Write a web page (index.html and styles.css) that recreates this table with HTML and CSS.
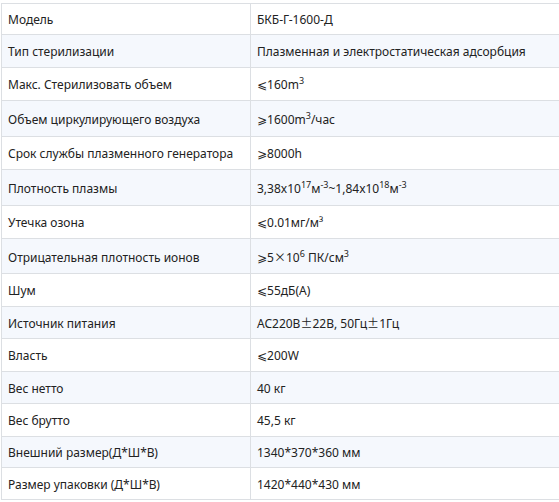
FILE: index.html
```html
<!DOCTYPE html>
<html lang="ru">
<head>
<meta charset="utf-8">
<link rel="stylesheet" href="styles.css">
</head>
<body>
<table class="spec">
<tbody>
<tr class="s2"><td class="k">Модель</td><td class="v">БКБ-Г-1600-Д</td></tr>
<tr class="alt"><td class="k">Тип стерилизации</td><td class="v">Плазменная и электростатическая адсорбция</td></tr>
<tr><td class="k">Макс. Стерилизовать объем</td><td class="v"><span class="sym">⩽</span>160m<sup>3</sup></td></tr>
<tr class="alt t3"><td class="k">Объем циркулирующего воздуха</td><td class="v"><span class="sym">⩾</span>1600m<sup>3</sup>/час</td></tr>
<tr><td class="k">Срок службы плазменного генератора</td><td class="v"><span class="sym">⩾</span>8000h</td></tr>
<tr class="alt t3"><td class="k">Плотность плазмы</td><td class="v">3,38x10<sup>17</sup>м<sup>-3</sup>~1,84x10<sup>18</sup>м<sup>-3</sup></td></tr>
<tr><td class="k">Утечка озона</td><td class="v"><span class="sym">⩽</span>0.01мг/м³</td></tr>
<tr class="alt t2"><td class="k">Отрицательная плотность ионов</td><td class="v"><span class="sym">⩾</span>5<span class="cjk">×</span>10<sup>6</sup> ПК/см<sup>3</sup></td></tr>
<tr><td class="k">Шум</td><td class="v"><span class="sym">⩽</span>55дБ(A)</td></tr>
<tr class="alt s1"><td class="k">Источник питания</td><td class="v">AC220В<span class="cjk">±</span>22В, 50Гц<span class="cjk">±</span>1Гц</td></tr>
<tr><td class="k">Власть</td><td class="v"><span class="sym">⩽</span>200W</td></tr>
<tr class="alt s1"><td class="k">Вес нетто</td><td class="v">40 кг</td></tr>
<tr><td class="k">Вес брутто</td><td class="v">45,5 кг</td></tr>
<tr class="alt s2"><td class="k">Внешний размер(Д*Ш*В)</td><td class="v">1340*370*360 мм</td></tr>
<tr class="s1"><td class="k">Размер упаковки (Д*Ш*В)</td><td class="v">1420*440*430 мм</td></tr>
</tbody>
</table>
</body>
</html>
```

FILE: styles.css
```css
html, body {
  margin: 0;
  padding: 0;
  background: #ffffff;
  overflow: hidden;
}
body {
  padding: 3px 0 0 1px;
  font-family: "Noto Sans", "Noto Sans CJK SC", sans-serif;
  font-size: 12px;
  line-height: 20px;
  color: #222222;
}
.spec {
  border-collapse: collapse;
  width: 620px;
  table-layout: fixed;
}
.spec td {
  border: 1px solid #dcdfe3;
  padding: 7px 6px 5px 6px;
  height: 20px;
  line-height: 20px;
  vertical-align: middle;
  white-space: nowrap;
}
.spec td.k {
  width: 236px;
}
.spec tr.alt td {
  background: #f5f8fd;
}
.spec tr.t3 td {
  padding-top: 9px;
  padding-bottom: 6px;
}
.spec tr.t2 td {
  padding-top: 9px;
  padding-bottom: 5px;
}
.spec tr.s1 td {
  padding-top: 7px;
  padding-bottom: 4px;
}
.spec tr.s2 td {
  padding-top: 6px;
  padding-bottom: 4px;
}
.sym {
  font-family: "DejaVu Sans", sans-serif;
  font-size: 12px;
  line-height: 1;
}
.cjk {
  font-family: "Noto Sans CJK SC", sans-serif;
  line-height: 1;
}
sup {
  font-size: 9px;
  line-height: 1;
}
```
